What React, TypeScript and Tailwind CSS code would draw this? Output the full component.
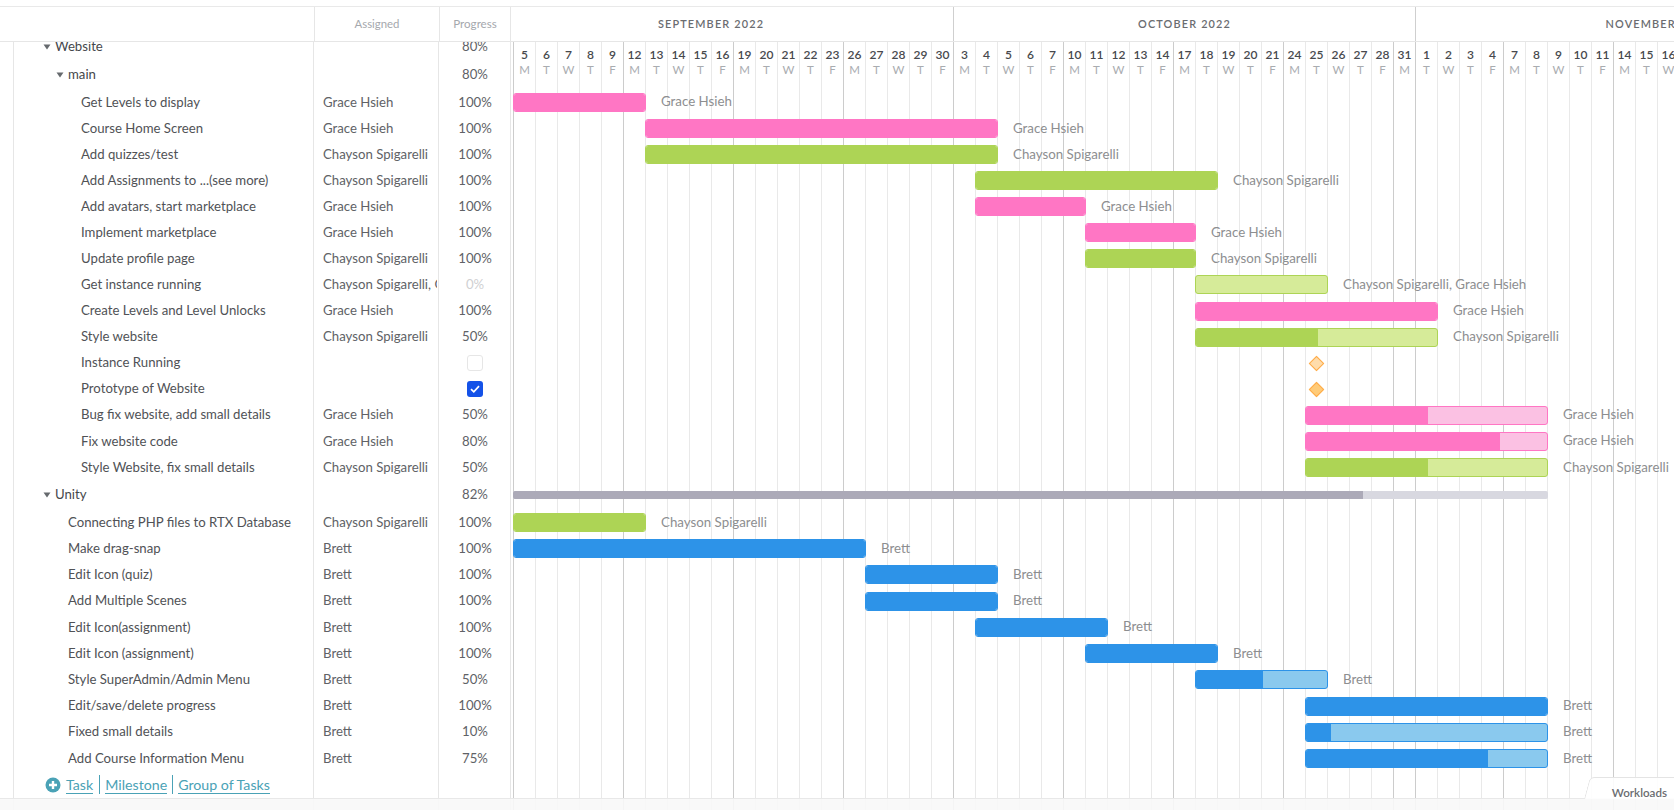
import React from "react";

type Row = {
  name: string;
  indent: number;
  group?: boolean;
  who?: string;
  pct?: string;
  check?: boolean;
  muted?: boolean;
  bar?: { c: "pink" | "green" | "blue" | "gray"; s: number; e: number; p: number; label?: string };
  diamond?: { k: number; done: boolean };
};

const G = "Grace Hsieh";
const C = "Chayson Spigarelli";
const B = "Brett";

const rows: Row[] = [
  { name: "Website", indent: 44, group: true, pct: "80%" },
  { name: "main", indent: 57, group: true, pct: "80%" },
  { name: "Get Levels to display", indent: 82, who: G, pct: "100%", bar: { c: "pink", s: 0, e: 6, p: 100, label: G } },
  { name: "Course Home Screen", indent: 82, who: G, pct: "100%", bar: { c: "pink", s: 6, e: 22, p: 100, label: G } },
  { name: "Add quizzes/test", indent: 82, who: C, pct: "100%", bar: { c: "green", s: 6, e: 22, p: 100, label: C } },
  { name: "Add Assignments to ...(see more)", indent: 82, who: C, pct: "100%", bar: { c: "green", s: 21, e: 32, p: 100, label: C } },
  { name: "Add avatars, start marketplace", indent: 82, who: G, pct: "100%", bar: { c: "pink", s: 21, e: 26, p: 100, label: G } },
  { name: "Implement marketplace", indent: 82, who: G, pct: "100%", bar: { c: "pink", s: 26, e: 31, p: 100, label: G } },
  { name: "Update profile page", indent: 82, who: C, pct: "100%", bar: { c: "green", s: 26, e: 31, p: 100, label: C } },
  { name: "Get instance running", indent: 82, who: "Chayson Spigarelli, Grace Hsieh", pct: "0%", muted: true, bar: { c: "green", s: 31, e: 37, p: 0, label: "Chayson Spigarelli, Grace Hsieh" } },
  { name: "Create Levels and Level Unlocks", indent: 82, who: G, pct: "100%", bar: { c: "pink", s: 31, e: 42, p: 100, label: G } },
  { name: "Style website", indent: 82, who: C, pct: "50%", bar: { c: "green", s: 31, e: 42, p: 50, label: C } },
  { name: "Instance Running", indent: 82, check: false, diamond: { k: 36, done: false } },
  { name: "Prototype of Website", indent: 82, check: true, diamond: { k: 36, done: true } },
  { name: "Bug fix website, add small details", indent: 82, who: G, pct: "50%", bar: { c: "pink", s: 36, e: 47, p: 50, label: G } },
  { name: "Fix website code", indent: 82, who: G, pct: "80%", bar: { c: "pink", s: 36, e: 47, p: 80, label: G } },
  { name: "Style Website, fix small details", indent: 82, who: C, pct: "50%", bar: { c: "green", s: 36, e: 47, p: 50, label: C } },
  { name: "Unity", indent: 44, group: true, pct: "82%", bar: { c: "gray", s: 0, e: 47, p: 82 } },
  { name: "Connecting PHP files to RTX Database", indent: 69, who: C, pct: "100%", bar: { c: "green", s: 0, e: 6, p: 100, label: C } },
  { name: "Make drag-snap", indent: 69, who: B, pct: "100%", bar: { c: "blue", s: 0, e: 16, p: 100, label: B } },
  { name: "Edit Icon (quiz)", indent: 69, who: B, pct: "100%", bar: { c: "blue", s: 16, e: 22, p: 100, label: B } },
  { name: "Add Multiple Scenes", indent: 69, who: B, pct: "100%", bar: { c: "blue", s: 16, e: 22, p: 100, label: B } },
  { name: "Edit Icon(assignment)", indent: 69, who: B, pct: "100%", bar: { c: "blue", s: 21, e: 27, p: 100, label: B } },
  { name: "Edit Icon (assignment)", indent: 69, who: B, pct: "100%", bar: { c: "blue", s: 26, e: 32, p: 100, label: B } },
  { name: "Style SuperAdmin/Admin Menu", indent: 69, who: B, pct: "50%", bar: { c: "blue", s: 31, e: 37, p: 50, label: B } },
  { name: "Edit/save/delete progress", indent: 69, who: B, pct: "100%", bar: { c: "blue", s: 36, e: 47, p: 100, label: B } },
  { name: "Fixed small details", indent: 69, who: B, pct: "10%", bar: { c: "blue", s: 36, e: 47, p: 10, label: B } },
  { name: "Add Course Information Menu", indent: 69, who: B, pct: "75%", bar: { c: "blue", s: 36, e: 47, p: 75, label: B } },
];

function rowHeight(i: number) {
  if (i === 0) return "h-[26.8px]";
  if (i === 1) return "h-[29px]";
  if (i === 17) return "h-[28.8px]";
  return i < 17 ? "h-[26.08px]" : "h-[26.24px]";
}

const barClass = {
  pink: { track: "bg-[#fbc1e3] border border-[#ff76c4] h-[19px] rounded-[3px]", fill: "bg-[#ff76c4]" },
  green: { track: "bg-[#d6eb99] border border-[#add455] h-[19px] rounded-[3px]", fill: "bg-[#add455]" },
  blue: { track: "bg-[#8ac9ee] border border-[#2d93e8] h-[19px] rounded-[3px]", fill: "bg-[#2d93e8]" },
  gray: { track: "bg-[#d8d8e0] h-[8px] rounded-[2px]", fill: "bg-[#acaab8]" },
};

const months = [
  { label: "SEPTEMBER 2022", w: "w-[484px] -ml-[44px]", days: [5,6,7,8,9,12,13,14,15,16,19,20,21,22,23,26,27,28,29,30], first: 1 },
  { label: "OCTOBER 2022", w: "w-[462px]", days: [3,4,5,6,7,10,11,12,13,14,17,18,19,20,21,24,25,26,27,28,31], first: 1 },
  { label: "NOVEMBER 2022", w: "w-[484px]", days: [1,2,3,4,7,8,9,10,11,14,15,16,17], first: 2 },
];

const letters = ["M", "T", "W", "T", "F"];
const days = months.flatMap((m) => m.days.map((d, i) => ({ d, wd: letters[(i + m.first - 1) % 5] })));
const STEP = 22;

function Triangle() {
  return (
    <svg width="8" height="6" viewBox="0 0 8 6" className="mr-[4px] shrink-0">
      <path d="M0.5 0.5h7L4 5.5z" fill="#666a6e" />
    </svg>
  );
}

function Bar({ r }: { r: Row }) {
  const b = r.bar!;
  const cls = barClass[b.c];
  return (
    <div className="flex items-center h-full" style={{ marginLeft: b.s * STEP }}>
      <div className={`${cls.track} flex overflow-hidden box-border shrink-0`} style={{ width: (b.e - b.s) * STEP + 1 }}>
        <div className={cls.fill} style={{ width: b.p > 0 ? `calc(${b.p}% + 1px)` : 0 }} />
      </div>
      {b.label && <span className="ml-[15px] text-[13.3px] text-[#8d8e90] whitespace-nowrap">{b.label}</span>}
    </div>
  );
}

export default function App() {
  return (
    <div
      className="relative w-full h-screen overflow-hidden bg-white text-[13.2px] text-[#54565a] flex flex-col"
      style={{ fontFamily: "Lato, 'Liberation Sans', sans-serif" }}
    >
      <div className="h-[7px] shrink-0 border-b border-[#e9e9e9]" />
      <div className="h-[35px] shrink-0 flex border-b border-[#e6e6e6]">
        <div className="w-[315px] shrink-0 border-r border-[#e6e6e6]" />
        <div className="w-[125px] shrink-0 border-r border-[#e6e6e6] flex items-center justify-center text-[11.4px] text-[#a5a8ad]">Assigned</div>
        <div className="w-[70px] shrink-0 flex items-center justify-center text-[11.6px] text-[#a5a8ad]">Progress</div>
        <div className="flex-1 flex overflow-hidden border-l border-[#e6e6e6] pl-[2px]">
          {months.map((m, i) => (
            <div
              key={m.label}
              className={`${m.w} shrink-0 flex items-center justify-center text-[10.9px] font-semibold tracking-[1.15px] text-[#6a6c70] ${i > 0 ? "border-l border-[#cfcfcf]" : ""}`}
            >
              {m.label}
            </div>
          ))}
        </div>
      </div>

      <div className="flex-1 flex min-h-0 overflow-hidden">
        <div className="w-[14px] shrink-0 border-r border-[#e6e6e6]" />
        <div className="w-[496px] shrink-0 overflow-hidden relative flex">
          <div className="w-[300px] shrink-0 border-r border-[#e6e6e6]" />
          <div className="w-[125px] shrink-0 border-r border-[#e6e6e6]" />
          <div className="absolute inset-0 -top-[8.4px] flex flex-col -ml-[15px]">
            {rows.map((r, i) => (
              <div key={r.name} className={`flex items-center shrink-0 ${rowHeight(i)}`}>
                <div className="w-[315px] shrink-0 flex items-center whitespace-nowrap" style={{ paddingLeft: r.indent }}>
                  {r.group && <Triangle />}
                  <span className={r.group ? "text-[#45474b]" : "text-[#505256]"}>{r.name}</span>
                </div>
                <div className="w-[123px] shrink-0 pl-[9px] overflow-hidden whitespace-nowrap text-[#606266]">{r.who}</div>
                <div className={`w-[76px] shrink-0 flex justify-center ${r.muted ? "text-[#cfd0d2]" : "text-[#606266]"}`}>
                  {r.check === false && <div className="w-[16px] h-[16px] rounded-[3px] border border-[#e6e6e6]" />}
                  {r.check === true && (
                    <div className="w-[16px] h-[16px] rounded-[3px] bg-[#1452e8] flex items-center justify-center">
                      <svg width="10" height="8" viewBox="0 0 10 8" fill="none">
                        <path d="M1 4.2l2.8 2.6L9 1.2" stroke="#fff" strokeWidth="1.7" />
                      </svg>
                    </div>
                  )}
                  {r.pct}
                </div>
              </div>
            ))}
            <div className="flex items-center h-[26px] pl-[46px] text-[14.2px] text-[#4aa2b6]">
              <svg width="16" height="16" viewBox="0 0 16 16" className="mr-[5px]">
                <circle cx="8" cy="8" r="7.5" fill="#4aa2b6" />
                <path d="M8 4v8M4 8h8" stroke="#fff" strokeWidth="2.4" />
              </svg>
              <span className="border-b border-[#4aa2b6] leading-[17px]">Task</span>
              <span className="w-px h-[19px] bg-[#4aa2b6] mx-[5.5px]" />
              <span className="border-b border-[#4aa2b6] leading-[17px]">Milestone</span>
              <span className="w-px h-[19px] bg-[#4aa2b6] mx-[5px]" />
              <span className="border-b border-[#4aa2b6] leading-[17px]">Group of Tasks</span>
            </div>
          </div>
        </div>

        <div className="flex-1 relative overflow-hidden border-l border-[#e6e6e6] pl-[2px]">
          <div className="flex h-full">
            {days.map((x, i) => (
              <div
                key={i}
                className={`w-[22px] shrink-0 h-full border-l flex flex-col items-center pt-[6px] ${i % 5 === 0 || i === 41 ? "border-[#cccccc]" : "border-[#e9e9e9]"}`}
              >
                <span className="text-[12px] leading-[14px] font-semibold text-[#47494d]">{x.d}</span>
                <span className="text-[11.5px] leading-[15px] text-[#a9acb0]">{x.wd}</span>
              </div>
            ))}
          </div>
          <div className="absolute left-[2px] right-0 -top-[8.4px] flex flex-col">
            {rows.map((r, i) => (
              <div key={r.name} className={`shrink-0 ${rowHeight(i)}`}>
                {r.bar && <Bar r={r} />}
                {r.diamond && (
                  <div className="flex items-center h-full" style={{ marginLeft: r.diamond.k * STEP + 6 }}>
                    <div className={`w-[11px] h-[11px] rotate-45 border border-[#ffab47] ${r.diamond.done ? "bg-[#ffcb78]" : "bg-[#ffdcab]"}`} />
                  </div>
                )}
              </div>
            ))}
          </div>
        </div>
      </div>

      <div className="absolute left-0 right-0 bottom-0 h-[12px] bg-[#f8f8f8]/90 border-t border-[#e8e8e8]" />
      <div className="absolute -right-[4px] bottom-[11px] w-[94px] h-[22px] bg-white/90 rounded-tl-[5px] border-t border-l border-[#e4e4e4] -skew-x-[15deg] origin-bottom" />
      <div className="absolute right-[7px] bottom-[9px] text-[11.6px] font-semibold text-[#6a6c70]">Workloads</div>
    </div>
  );
}
